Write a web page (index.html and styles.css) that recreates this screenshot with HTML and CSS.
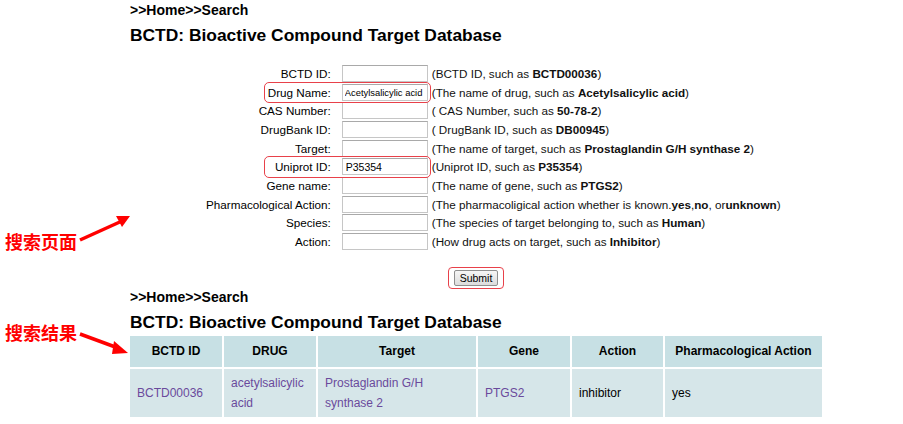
FILE: index.html
```html
<!DOCTYPE html>
<html lang="en">
<head>
<meta charset="UTF-8">
<title>BCTD Search</title>
<link rel="stylesheet" href="styles.css">
</head>
<body>
<div id="page">
  <div class="crumb">&gt;&gt;Home&gt;&gt;Search</div>
  <h1 class="title">BCTD: Bioactive Compound Target Database</h1>

  <form id="search-form">
    <table class="form-table">
      <tr><td class="lbl">BCTD ID:</td><td><input type="text"></td><td class="hint">(BCTD ID, such as <b>BCTD00036</b>)</td></tr>
      <tr><td class="lbl"><span class="mark">Drug Name:</span></td><td><input type="text" value="Acetylsalicylic acid" class="filled"></td><td class="hint">(The name of drug, such as <b>Acetylsalicylic acid</b>)</td></tr>
      <tr><td class="lbl">CAS Number:</td><td><input type="text"></td><td class="hint">( CAS Number, such as <b>50-78-2</b>)</td></tr>
      <tr><td class="lbl">DrugBank ID:</td><td><input type="text"></td><td class="hint">( DrugBank ID, such as <b>DB00945</b>)</td></tr>
      <tr><td class="lbl">Target:</td><td><input type="text"></td><td class="hint">(The name of target, such as <b>Prostaglandin G/H synthase 2</b>)</td></tr>
      <tr><td class="lbl"><span class="mark">Uniprot ID:</span></td><td><input type="text" value="P35354" class="filled-id"></td><td class="hint">(Uniprot ID, such as <b>P35354</b>)</td></tr>
      <tr><td class="lbl">Gene name:</td><td><input type="text"></td><td class="hint">(The name of gene, such as <b>PTGS2</b>)</td></tr>
      <tr><td class="lbl">Pharmacological Action:</td><td><input type="text"></td><td class="hint">(The pharmacoligical action whether is known.<b>yes</b>,<b>no</b>, or<b>unknown</b>)</td></tr>
      <tr><td class="lbl">Species:</td><td><input type="text"></td><td class="hint">(The species of target belonging to, such as <b>Human</b>)</td></tr>
      <tr><td class="lbl">Action:</td><td><input type="text"></td><td class="hint">(How drug acts on target, such as <b>Inhibitor</b>)</td></tr>
    </table>
    <div class="submit-row">
      <span class="submit-box"><button type="button" class="submit-btn">Submit</button></span>
    </div>
  </form>

  <div class="crumb">&gt;&gt;Home&gt;&gt;Search</div>
  <h1 class="title">BCTD: Bioactive Compound Target Database</h1>

  <table class="result">
    <tr>
      <th class="c1">BCTD ID</th>
      <th class="c2">DRUG</th>
      <th class="c3">Target</th>
      <th class="c4">Gene</th>
      <th class="c5">Action</th>
      <th class="c6">Pharmacological Action</th>
    </tr>
    <tr>
      <td><a href="#">BCTD00036</a></td>
      <td><a href="#">acetylsalicylic acid</a></td>
      <td><a href="#">Prostaglandin G/H synthase 2</a></td>
      <td><a href="#">PTGS2</a></td>
      <td>inhibitor</td>
      <td>yes</td>
    </tr>
  </table>
</div>

<!-- annotations -->
<div class="note note-search">搜索页面</div>
<svg class="arrow arrow-search" width="60" height="40" viewBox="0 0 60 40">
  <line x1="2" y1="30" x2="44" y2="11" stroke="#f00" stroke-width="3.5"/>
  <polygon points="52,6 38,6 44,17" fill="#f00"/>
</svg>
<div class="note note-result">搜索结果</div>
<svg class="arrow arrow-result" width="60" height="30" viewBox="0 0 60 30">
  <line x1="2" y1="4" x2="40" y2="18" stroke="#f00" stroke-width="3.5"/>
  <polygon points="50,23 36,11 34,24" fill="#f00"/>
</svg>
</body>
</html>
```

FILE: styles.css
```css
/* page */
body {
  margin: 0;
  background: #fff;
  color: #000;
  font-family: "Liberation Sans", Arial, sans-serif;
  position: relative;
}

#page {
  width: 692px;
  margin-left: 130px;
  padding-top: 2px;
}

.crumb {
  font-size: 14px;
  font-weight: bold;
  line-height: 17px;
}

.title {
  font-size: 17.4px;
  font-weight: bold;
  margin: 4px 0 0 0;
  line-height: 24px;
}

/* search form */
#search-form {
  margin-top: 17px;
}

.form-table {
  margin: 0 0 0 76px;
  border-collapse: collapse;
  font-size: 11.7px;
}

.form-table td {
  padding: 0;
  height: 18.7px;
  white-space: nowrap;
}

.form-table .lbl {
  text-align: right;
  padding-right: 11px;
  position: relative;
}

.form-table .hint {
  padding-left: 4px;
  color: #111;
}

.form-table input {
  width: 78px;
  height: 13px;
  padding: 1px 3px;
  border: 1px solid #c6c6c6;
  border-top-color: #a9a9a9;
  font-family: "Liberation Sans", Arial, sans-serif;
  font-size: 10px;
  margin: 0;
  display: block;
}

.form-table input.filled {
  font-size: 9.4px;
  padding: 1px 2px;
  width: 80px;
}

.form-table input.filled-id {
  font-size: 10.5px;
}

/* red box around marked fields */
.mark::before {
  content: "";
  position: absolute;
  right: -89px;
  width: 165px;
  top: -1px;
  bottom: -2px;
  border: 1.5px solid #e8414a;
  border-radius: 5px;
}

.submit-row {
  text-align: center;
  margin-top: 16px;
  height: 22px;
}

.submit-box {
  display: inline-block;
  border: 1.5px solid #e8414a;
  border-radius: 4px;
  padding: 2px 5px;
}

.submit-btn {
  font-family: "Liberation Sans", Arial, sans-serif;
  font-size: 10.5px;
  padding: 1px 5px;
  background: linear-gradient(#f6f6f6, #dcdcdc);
  border: 1px solid #8f8f8f;
  border-radius: 2px;
  display: block;
}

/* result table */
.result {
  border-collapse: separate;
  border-spacing: 2px;
  margin: 0 0 0 -2px;
  width: 696px;
  font-size: 12px;
}

.result th {
  background: #c7e0e4;
  height: 31px;
  padding: 0;
  font-weight: bold;
}

.result td {
  background: #d6e6e9;
  height: 48px;
  padding: 0 7px;
  line-height: 20px;
}

.result a {
  color: #6a4a9c;
  text-decoration: none;
}

.c1 { width: 92px; }
.c2 { width: 92px; }
.c3 { width: 158px; }
.c4 { width: 92px; }
.c5 { width: 91px; }

/* annotations */
.note {
  position: absolute;
  left: 5px;
  color: #f00;
  font-family: "Noto Sans CJK SC", sans-serif;
  font-weight: bold;
  font-size: 18px;
  line-height: 20px;
}

.note-search { top: 231px; }
.note-result { top: 322px; }

.arrow {
  position: absolute;
}

.arrow-search { left: 78px; top: 210px; }
.arrow-result { left: 78px; top: 330px; }
```
